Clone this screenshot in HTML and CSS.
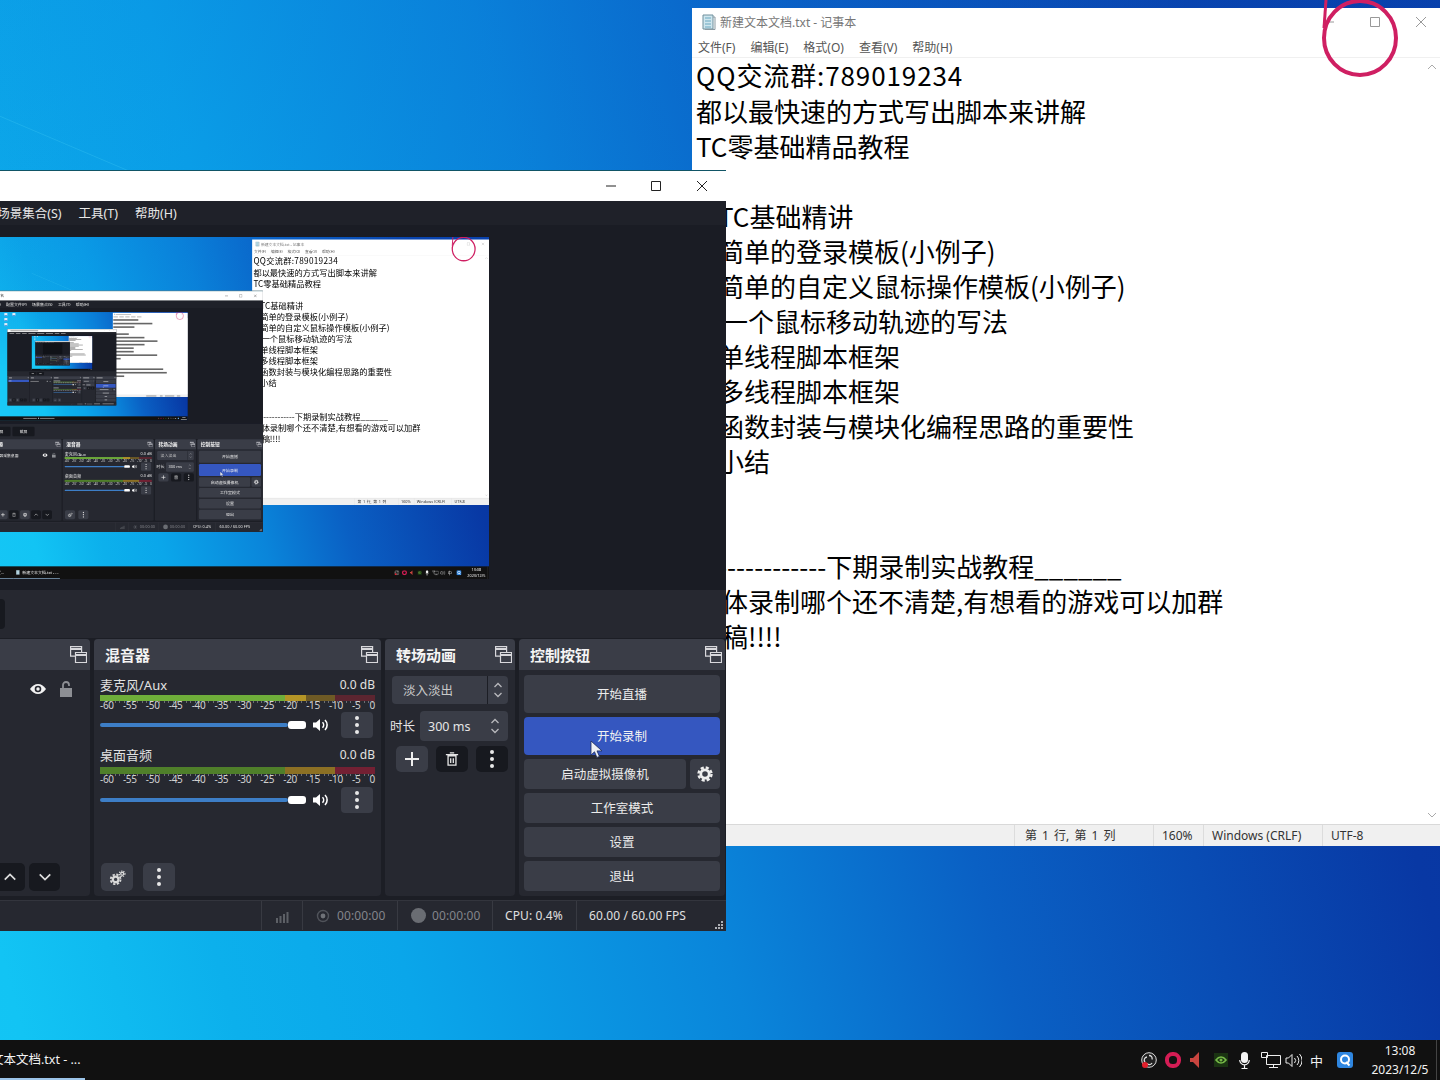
FILE: index.html
```html
<!DOCTYPE html>
<html lang="zh-CN">
<head>
<meta charset="utf-8">
<title>OBS 录制桌面</title>
<link rel="stylesheet" href="styles.css">
</head>
<body>
<svg class="defs" aria-hidden="true">
  <symbol id="i-float" viewBox="0 0 17 17"><path d="M.6.6h11v9.5H.6z" fill="none" stroke="#d8d8dc" stroke-width="1.2"/><path d="M.6 3h11" stroke="#d8d8dc" stroke-width="2"/><path d="M5.5 6.5h11v10h-11z" fill="#3a3d47" stroke="#d8d8dc" stroke-width="1.2"/><path d="M5.5 9h11" stroke="#d8d8dc" stroke-width="2"/></symbol>
  <symbol id="i-kebab" viewBox="0 0 6 20"><circle cx="3" cy="3" r="2" fill="#e8e8e8"/><circle cx="3" cy="10" r="2" fill="#e8e8e8"/><circle cx="3" cy="17" r="2" fill="#e8e8e8"/></symbol>
  <symbol id="i-spk" viewBox="0 0 17 14"><path d="M1 4.5h3L8 1v12L4 9.500H1z" fill="#fff"/><path d="M10.500 4.200a4 4 0 0 1 0 5.600M13 2a7 7 0 0 1 0 10" fill="none" stroke="#fff" stroke-width="1.600"/></symbol>
  <symbol id="i-updown" viewBox="0 0 10 18"><path d="M1.500 6 5 2.500 8.500 6M1.500 12 5 15.500 8.500 12" fill="none" stroke="#b8b8bc" stroke-width="1.300"/></symbol>
  <symbol id="i-gear" viewBox="0 0 16 16"><circle cx="8" cy="8" r="4.200" fill="none" stroke="#eee" stroke-width="2.800"/><circle cx="8" cy="8" r="6.500" fill="none" stroke="#eee" stroke-width="2.400" stroke-dasharray="3.100 2"/></symbol>
</svg>

<main class="viewport">
  <div class="screen" id="screen">
    <div class="desk-ray"></div>
    <div class="desk-icon desk-a"></div>
    <div class="desk-icon desk-b"></div>
    <div class="desk-icon desk-c"></div>
    <div class="desk-icon desk-d"></div>

    <section class="notepad">
      <header class="np-title">
        <svg class="np-icon" viewBox="0 0 14 16"><path d="M1 1h10v14H1z" fill="#cfe6ee" stroke="#6f8f9c"/><path d="M11 3h2v12.500H3V15" fill="none" stroke="#8a9aa2"/><path d="M3 4h6M3 7h6M3 10h6M3 13h6" stroke="#6aa8c0"/></svg>
        <span class="np-name">新建文本文档.txt - 记事本</span>
        <div class="np-btns">
          <span class="np-btn"><svg viewBox="0 0 10 10"><path d="M0 5h10" stroke="#999"/></svg></span>
          <span class="np-btn"><svg viewBox="0 0 10 10"><path d="M.5.5h9v9h-9z" fill="none" stroke="#999"/></svg></span>
          <span class="np-btn"><svg viewBox="0 0 10 10"><path d="M0 0l10 10M10 0 0 10" stroke="#999"/></svg></span>
        </div>
      </header>
      <nav class="np-menu"><span>文件(F)</span><span>编辑(E)</span><span>格式(O)</span><span>查看(V)</span><span>帮助(H)</span></nav>
      <div class="np-body">
        <div class="np-text">
          <p class="np-first">QQ交流群:789019234</p>
          <p>都以最快速的方式写出脚本来讲解</p>
          <p>TC零基础精品教程</p>
          <p></p>
          <p class="np-ind">TC基础精讲</p>
          <p class="np-ind">简单的登录模板(小例子)</p>
          <p class="np-ind">简单的自定义鼠标操作模板(小例子)</p>
          <p class="np-ind np-ind-wide">一个鼠标移动轨迹的写法</p>
          <p class="np-ind">单线程脚本框架</p>
          <p class="np-ind">多线程脚本框架</p>
          <p class="np-ind">函数封装与模块化编程思路的重要性</p>
          <p class="np-ind">小结</p>
          <p></p>
          <p></p>
          <p class="np-dash">--------------下期录制实战教程______</p>
          <p>具体录制哪个还不清楚,有想看的游戏可以加群</p>
          <p>投稿!!!!</p>
        </div>
        <aside class="np-scroll">
          <svg viewBox="0 0 10 6"><path d="M1 5l4-4 4 4" fill="none" stroke="#aaa"/></svg>
          <svg viewBox="0 0 10 6"><path d="M1 1l4 4 4-4" fill="none" stroke="#aaa"/></svg>
        </aside>
      </div>
      <footer class="np-status">
        <span></span><span>第 1 行, 第 1 列</span><span>160%</span><span>Windows (CRLF)</span><span>UTF-8</span>
      </footer>
    </section>

    <svg class="pen-circle" viewBox="0 0 110 85"><ellipse cx="45" cy="38" rx="36" ry="37" fill="none" stroke="#cf1f62" stroke-width="4"/><path d="M11 0 9 28" fill="none" stroke="#cf1f62" stroke-width="3"/></svg>

    <section class="obs">
      <header class="obs-title">
        <span class="obs-name">OBS 29.1.3 - 配置文件: 未命名 - 场景: 未命名</span>
        <div class="obs-btns">
          <span><svg viewBox="0 0 10 10"><path d="M0 5h10" stroke="#222"/></svg></span>
          <span><svg viewBox="0 0 10 10"><path d="M.5.5h9v9h-9z" fill="none" stroke="#222"/></svg></span>
          <span><svg viewBox="0 0 10 10"><path d="M0 0l10 10M10 0 0 10" stroke="#222"/></svg></span>
        </div>
      </header>
      <nav class="obs-menu"><span>文件(F)</span><span>编辑(E)</span><span>视图(V)</span><span>停靠窗口(D)</span><span>配置文件(P)</span><span>场景集合(S)</span><span>工具(T)</span><span>帮助(H)</span></nav>
      <div class="obs-preview"><div class="preview-slot"></div></div>
      <div class="scene-tools"><span class="tool-btn">录屏</span><span class="tool-btn">截屏</span></div>

      <div class="docks">
        <section class="dock dock-scenes">
          <h2 class="dock-head"><span>场景</span><svg class="float"><use href="#i-float"/></svg></h2>
          <div class="scene-list"><div class="scene-row">场景</div></div>
          <div class="dock-foot">
            <span class="ib ib-light"><svg viewBox="0 0 14 14"><path d="M7 1v12M1 7h12" stroke="#eee" stroke-width="2"/></svg></span>
            <span class="ib ib-dark"><svg viewBox="0 0 14 14"><path d="M3 4h8v9H3zM2 3h10M5 1h4" fill="none" stroke="#ddd" stroke-width="1.500"/></svg></span>
            <span class="ib ib-light"><svg><use href="#i-gear"/></svg></span>
            <span class="ib ib-dark"><svg viewBox="0 0 16 10"><path d="M2 8l6-6 6 6" fill="none" stroke="#ddd" stroke-width="2"/></svg></span>
            <span class="ib ib-dark"><svg viewBox="0 0 16 10"><path d="M2 2l6 6 6-6" fill="none" stroke="#ddd" stroke-width="2"/></svg></span>
          </div>
        </section>

        <section class="dock dock-sources">
          <h2 class="dock-head"><span>来源</span><svg class="float"><use href="#i-float"/></svg></h2>
          <div class="source-list">
            <div class="source-row">
              <span class="source-name">显示器采集桌面</span>
              <svg class="eye" viewBox="0 0 18 12"><path d="M1 6c2.500-3.600 5-5 8-5s5.500 1.400 8 5c-2.500 3.600-5 5-8 5s-5.500-1.400-8-5z" fill="#f2f2f2"/><circle cx="9" cy="6" r="3.300" fill="#262830"/><circle cx="9" cy="6" r="1.700" fill="#f2f2f2"/></svg>
              <svg class="lock" viewBox="0 0 12 16"><path d="M3 7V4a3 3 0 0 1 6 0v1" fill="none" stroke="#8d8f94" stroke-width="1.800"/><path d="M0 7h12v9H0z" fill="#8d8f94"/></svg>
            </div>
          </div>
          <div class="dock-foot dock-foot-src">
            <span class="ib ib-light"><svg viewBox="0 0 14 14"><path d="M7 1v12M1 7h12" stroke="#eee" stroke-width="2"/></svg></span>
            <span class="ib ib-dark"><svg viewBox="0 0 14 16"><path d="M3 5h8v10H3zM1 3h12M5 1h4" fill="none" stroke="#ddd" stroke-width="1.500"/></svg></span>
            <span class="ib ib-light"><svg><use href="#i-gear"/></svg></span>
            <span class="ib ib-dark"><svg viewBox="0 0 16 10"><path d="M2 8l6-6 6 6" fill="none" stroke="#ddd" stroke-width="2"/></svg></span>
            <span class="ib ib-dark"><svg viewBox="0 0 16 10"><path d="M2 2l6 6 6-6" fill="none" stroke="#ddd" stroke-width="2"/></svg></span>
          </div>
        </section>

        <section class="dock dock-mixer">
          <h2 class="dock-head"><span>混音器</span><svg class="float"><use href="#i-float"/></svg></h2>
          <div class="mixer-body">
            <div class="channel">
              <div class="ch-head"><span>麦克风/Aux</span><span class="ch-db">0.0 dB</span></div>
              <div class="meter meter-live"><i></i><i></i></div>
              <div class="ticks"></div>
              <div class="scale"><span>-60</span><span>-55</span><span>-50</span><span>-45</span><span>-40</span><span>-35</span><span>-30</span><span>-25</span><span>-20</span><span>-15</span><span>-10</span><span>-5</span><span>0</span></div>
              <div class="fader"><div class="f-track"></div><div class="f-thumb"></div><svg class="f-spk"><use href="#i-spk"/></svg><span class="f-menu"><svg><use href="#i-kebab"/></svg></span></div>
            </div>
            <div class="channel channel-2">
              <div class="ch-head"><span>桌面音频</span><span class="ch-db">0.0 dB</span></div>
              <div class="meter"><i></i><i></i></div>
              <div class="ticks"></div>
              <div class="scale"><span>-60</span><span>-55</span><span>-50</span><span>-45</span><span>-40</span><span>-35</span><span>-30</span><span>-25</span><span>-20</span><span>-15</span><span>-10</span><span>-5</span><span>0</span></div>
              <div class="fader"><div class="f-track"></div><div class="f-thumb"></div><svg class="f-spk"><use href="#i-spk"/></svg><span class="f-menu"><svg><use href="#i-kebab"/></svg></span></div>
            </div>
          </div>
          <div class="dock-foot dock-foot-mix">
            <span class="ib ib-light ib-gears"><svg viewBox="0 0 18 16"><circle cx="7" cy="10" r="3" fill="none" stroke="#d8d8d8" stroke-width="2.400"/><circle cx="7" cy="10" r="5.200" fill="none" stroke="#d8d8d8" stroke-width="2" stroke-dasharray="2.500 1.600"/><circle cx="14" cy="4" r="1.600" fill="none" stroke="#d8d8d8" stroke-width="1.400"/><circle cx="14" cy="4" r="3" fill="none" stroke="#d8d8d8" stroke-width="1.200" stroke-dasharray="1.500 1"/></svg></span>
            <span class="ib ib-light"><svg class="kb"><use href="#i-kebab"/></svg></span>
          </div>
        </section>

        <section class="dock dock-trans">
          <h2 class="dock-head"><span>转场动画</span><svg class="float"><use href="#i-float"/></svg></h2>
          <div class="trans-body">
            <div class="t-select"><span class="t-value">淡入淡出</span><span class="t-arrow"><svg><use href="#i-updown"/></svg></span></div>
            <div class="t-dur"><span class="t-label">时长</span><div class="t-spin"><span>300 ms</span><svg><use href="#i-updown"/></svg></div></div>
            <div class="t-tools">
              <span class="ib ib-light"><svg viewBox="0 0 14 14"><path d="M7 0v14M0 7h14" stroke="#eee" stroke-width="2"/></svg></span>
              <span class="ib ib-dark"><svg viewBox="0 0 14 16"><path d="M2.500 4.500h9V15h-9zM0 3h14M4.500 1h5M5.500 7v5.500M8.500 7v5.500" fill="none" stroke="#e4e4e4" stroke-width="1.500"/></svg></span>
              <span class="ib ib-dark"><svg class="kb"><use href="#i-kebab"/></svg></span>
            </div>
          </div>
        </section>

        <section class="dock dock-ctrl">
          <h2 class="dock-head"><span>控制按钮</span><svg class="float"><use href="#i-float"/></svg></h2>
          <div class="ctrl-body">
            <button class="cb cb-tall">开始直播</button>
            <button class="cb cb-tall cb-on">开始录制</button>
            <div class="cb-row"><button class="cb cb-grow">启动虚拟摄像机</button><button class="cb cb-icon"><svg><use href="#i-gear"/></svg></button></div>
            <button class="cb">工作室模式</button>
            <button class="cb">设置</button>
            <button class="cb">退出</button>
          </div>
        </section>
      </div>

      <footer class="obs-status">
        <span class="st st-signal"><svg viewBox="0 0 16 14"><path d="M1 9h2v5H1zM4.500 7h2v7h-2zM8 5h2v9H8zM11.500 3h2v11h-2z" fill="#5d6066"/></svg></span>
        <span class="st st-live"><svg viewBox="0 0 14 14"><circle cx="7" cy="7" r="2.400" fill="#6f7278"/><circle cx="7" cy="7" r="5.500" fill="none" stroke="#50535a" stroke-width="1.400"/></svg><b>00:00:00</b></span>
        <span class="st st-rec"><i class="rec-dot"></i><b>00:00:00</b></span>
        <span class="st st-cpu">CPU: 0.4%</span>
        <span class="st st-fps">60.00 / 60.00 FPS</span>
        <svg class="grip" viewBox="0 0 8 8"><path d="M6 0h2v2H6zM3 3h2v2H3zM6 3h2v2H6zM0 6h2v2H0zM3 6h2v2H3zM6 6h2v2H6z" fill="#aeb0b5"/></svg>
      </footer>
    </section>

    <svg class="cursor" viewBox="0 0 13 19"><path d="M1 1v14l3.500-3.200 2.400 5.600 2.500-1-2.400-5.500H12z" fill="#eef0f5" stroke="#1c2b58" stroke-width=".8"/></svg>

    <footer class="taskbar">
      <span class="task task-obs"><span class="task-label">OBS 29.1.3 - 配置...</span></span>
      <span class="task">
        <svg class="np-icon" viewBox="0 0 14 16"><path d="M1 1h10v14H1z" fill="#cfe6ee" stroke="#6f8f9c"/><path d="M3 4h6M3 7h6M3 10h6M3 13h6" stroke="#6aa8c0"/></svg>
        <span class="task-label">新建文本文档.txt - ...</span>
      </span>
      <div class="tray">
        <svg class="tr tr-obs" viewBox="0 0 16 16"><circle cx="8" cy="8" r="7.300" fill="#222" stroke="#ddd"/><path d="M8 3.500a3 3 0 0 1 3 4M4 10a3 3 0 0 1 2-5M11 11a3 3 0 0 1-5 .5" fill="none" stroke="#ddd" stroke-width="1.300"/><circle cx="4" cy="13" r="3" fill="#e2202c"/></svg>
        <svg class="tr tr-ring" viewBox="0 0 16 16"><rect x="2" y="2" width="12" height="12" rx="5.500" fill="none" stroke="#d51d55" stroke-width="4"/></svg>
        <svg class="tr tr-rspk" viewBox="0 0 9 16"><path d="M0 6h3l6-6v16L3 10H0z" fill="#c9453f"/></svg>
        <svg class="tr tr-nv" viewBox="0 0 14 14"><rect width="14" height="14" fill="#1a3312"/><path d="M2 7c3-4 7-4 10 0-3 4-7 4-10 0z" fill="none" stroke="#76b947" stroke-width="1.600"/><circle cx="7" cy="7" r="1.500" fill="#76b947"/></svg>
        <svg class="tr tr-mic" viewBox="0 0 11 17"><rect x="2" y="0" width="7" height="11" rx="3.500" fill="#f4f4f4"/><path d="M.7 8a4.800 4.800 0 0 0 9.600 0M5.500 13v3M2.500 16.500h6" fill="none" stroke="#f4f4f4" stroke-width="1.200"/></svg>
        <svg class="tr tr-net" viewBox="0 0 20 16"><path d="M5.500 3.500h14v9h-14zM8 15.500h9M12.500 12.500v3M.5.500h6v5h-6z" fill="#111" stroke="#eee"/></svg>
        <svg class="tr tr-vol" viewBox="0 0 17 15"><path d="M1 5h2.500L7 1.500v12L3.500 10H1z" fill="none" stroke="#eee"/><path d="M9.500 5a3.600 3.600 0 0 1 0 5M12 3a6.500 6.500 0 0 1 0 9M14.500 1a9.500 9.500 0 0 1 0 13" fill="none" stroke="#eee"/></svg>
        <span class="tr-ime">中</span>
        <svg class="tr tr-q" viewBox="0 0 16 16"><rect width="16" height="16" rx="3" fill="#2f86e0"/><circle cx="8" cy="7.500" r="4" fill="none" stroke="#fff" stroke-width="2"/><path d="M9 10l3.500 3.500" stroke="#fff" stroke-width="2"/></svg>
        <time class="clock"><span>13:08</span><span>2023/12/5</span></time>
      </div>
    </footer>
  </div>
</main>
<script src="app.js"></script>
</body>
</html>
```
FILE: styles.css
```css
* { box-sizing: border-box; }
html, body { margin: 0; padding: 0; background: #000; }
body { font-family: "Noto Sans", "Noto Sans CJK SC", sans-serif; }
.defs { position: absolute; width: 0; height: 0; }
p, h2 { margin: 0; }
svg { display: block; }

.viewport { width: 1440px; height: 1080px; overflow: hidden; }
.viewport > .screen { margin-left: -480px; }

.screen {
  position: relative;
  width: 1920px;
  height: 1080px;
  overflow: hidden;
  background:
    linear-gradient(to bottom, rgba(10, 110, 215, .22), rgba(10, 110, 215, 0) 55%),
    linear-gradient(75deg, #1ccaf6 0%, #12c4f4 23.300%, #0cb0ec 33%, #0aa6ea 41.400%, #0a85da 56.200%, #0a60c4 68.500%, #0838a4 88.500%, #0834a0 100%);
}

.desk-ray { position: absolute; left: 476px; top: 114px; width: 200px; height: 1px; background: rgba(70, 205, 245, .3); transform: rotate(23deg); transform-origin: 0 0; }
.desk-icon { position: absolute; width: 30px; height: 30px; background: #e6eef8; border-bottom: 8px solid #2a7fd4; }
.desk-a { left: 90px; top: 10px; }
.desk-b { left: 170px; top: 10px; }
.desk-c { left: 90px; top: 60px; }
.desk-d { left: 90px; top: 110px; }

/* notepad */
.notepad {
  position: absolute;
  left: 1172px;
  top: 8px;
  width: 752px;
  height: 838px;
  display: flex;
  flex-direction: column;
  background: #fff;
}
.np-title { height: 28px; flex: none; display: flex; align-items: center; padding-left: 10px; color: #777; font-size: 12px; }
.np-icon { width: 14px; height: 16px; flex: none; }
.np-name { margin-left: 4px; }
.np-btns { margin-left: auto; display: flex; }
.np-btn { width: 46px; height: 28px; display: flex; align-items: center; justify-content: center; }
.np-btn svg { width: 10px; height: 10px; }
.np-menu { height: 22px; flex: none; display: flex; gap: 15px; padding: 1px 0 0 6px; align-items: center; font-size: 12px; color: #555; border-bottom: 1px solid #f0f0f0; }
.np-body { flex: 1; display: flex; min-height: 0; overflow: hidden; }
.np-text { flex: 1; padding: 0 0 0 4px; font-size: 26px; line-height: 35px; color: #000; font-family: "Noto Sans CJK SC", sans-serif; font-weight: 400; }
.np-text p { height: 35px; white-space: pre; }
.np-text .np-first { letter-spacing: .9px; line-height: 33px; }
.np-text .np-ind { padding-left: 22px; }
.np-text .np-ind-wide { padding-left: 26px; }
.np-text .np-dash { padding-left: 4px; }
.np-scroll { width: 20px; flex: none; background: #fff; display: flex; flex-direction: column; justify-content: space-between; padding: 6px 4px 6px 0; align-items: center; }
.np-scroll svg { width: 10px; height: 6px; }
.np-status {
  height: 22px;
  flex: none;
  display: grid;
  grid-template-columns: 322px 139px 50px 119px 1fr;
  align-items: stretch;
  background: #f0f0f0;
  border-top: 1px solid #d9d9d9;
  color: #333;
  font-size: 12px;
  line-height: 21px;
}
.np-status span { padding-left: 8px; border-left: 1px solid #dcdcdc; }
.np-status span:first-child { border: 0; }
.np-status span:nth-child(2) { padding-left: 10px; word-spacing: 2px; }

.pen-circle { position: absolute; left: 1795px; top: 0; width: 110px; height: 85px; }

/* OBS */
.obs {
  position: absolute;
  left: 121px;
  top: 170px;
  width: 1085px;
  height: 761px;
  display: flex;
  flex-direction: column;
  background: #1c1e25;
  color: #e6e6e6;
  font-size: 12px;
}
.obs-title { height: 31px; flex: none; display: flex; align-items: center; background: #fff; color: #333; padding: 0 0 1px 30px; border-top: 1px solid #156; }
.obs-btns { margin-left: auto; display: flex; padding-right: 1.500px; }
.obs-btns span { width: 45px; height: 28px; display: flex; align-items: center; justify-content: center; }
.obs-btns span:last-child { width: 46px; }
.obs-btns svg { width: 10px; height: 10px; }
.obs-menu { height: 24px; flex: none; display: flex; gap: 17px; align-items: center; padding: 0 0 2px 21px; background: #1f2129; font-size: 12.500px; color: #e8e8e8; }
.obs-preview { flex: 1; min-height: 0; display: flex; align-items: center; justify-content: center; padding-left: 3px; background: #1a1c24; }
.preview-slot { position: relative; width: 608px; height: 342px; flex: none; overflow: hidden; background: #101218; filter: blur(.35px); }
.preview-slot > .screen { position: absolute; left: 0; top: 0; transform: scale(.31667); transform-origin: 0 0; }
.scene-tools { height: 48px; flex: none; display: flex; align-items: center; gap: 6px; padding-left: 218px; background: #262830; }
.tool-btn { width: 70px; height: 30px; border-radius: 4px; background: #17191f; display: flex; align-items: center; justify-content: center; font-size: 12px; flex: none; }

.docks { flex: none; height: 257px; margin: 1px 0 4px; padding: 0 1px 0 4px; display: flex; gap: 4px; }
.dock { display: flex; flex-direction: column; background: #262830; border-radius: 4px; flex: none; }
.dock-scenes { width: 215px; }
.dock-sources { width: 226px; }
.dock-mixer { width: 287px; }
.dock-trans { width: 130px; }
.dock-ctrl { width: 206px; }
.dock-head { height: 31px; flex: none; display: flex; align-items: center; justify-content: space-between; padding: 0 3px 0 11px; background: #3a3d47; border-radius: 4px 4px 0 0; font-size: 15px; font-weight: 700; color: #f4f4f4; }
.float { width: 17px; height: 17px; }

.scene-list { flex: 1; padding: 4px; }
.scene-row { height: 24px; line-height: 24px; padding-left: 8px; background: #3557c0; border-radius: 3px; }
.dock-foot { height: 33px; flex: none; display: flex; align-items: flex-start; gap: 5px; padding-left: 8px; }
.dock-foot-src { gap: 4px; justify-content: flex-end; padding: 0 30px 0 0; }
.dock-foot-src .ib { width: 31px; }
.dock-foot-mix { gap: 10px; padding-left: 7px; }

.ib { width: 32px; height: 28px; border-radius: 5px; display: flex; align-items: center; justify-content: center; flex: none; }
.ib svg { width: 14px; height: 14px; }
.ib .kb { width: 6px; height: 20px; }
.ib-light { background: #3a3d47; }
.ib-dark { background: #17191f; }
.ib-gears svg { width: 17px; height: 15px; }

.source-list { flex: 1; }
.source-row { height: 38px; display: flex; align-items: center; }
.source-name { flex: 1; padding-left: 6px; }
.eye { width: 18px; height: 12px; margin-right: 13px; }
.lock { width: 12px; height: 16px; margin-right: 18px; }

.mixer-body { flex: 1; padding: 6px 6px 0; }
.channel { height: 71px; }
.ch-head { display: flex; justify-content: space-between; font-size: 13px; line-height: 18px; color: #e2e2e2; }
.ch-db { font-size: 12px; }
.meter { margin-top: 1px; height: 6px; display: flex; flex-direction: column; }
.meter i { flex: 1; display: block; background: linear-gradient(to right, #4f7f2a 0 67.300%, #8c7024 67.300% 85.500%, #732033 85.500% 100%); }
.meter-live i { background: linear-gradient(to right, #6fae3a 0 67.300%, #b49526 67.300% 75%, #6e5a25 75% 85.500%, #5c2530 85.500% 100%); }
.ticks { height: 2px; background: repeating-linear-gradient(to right, #6c6e74 0 1px, transparent 1px 4.440px); margin-left: 6px; }
.scale { display: flex; justify-content: space-between; margin-top: -2px; font-size: 10px; line-height: 9px; color: #d0d0d0; letter-spacing: -.3px; }
.fader { display: flex; align-items: center; height: 26px; margin-top: 2px; }
.channel-2 .ch-head { margin-top: -1px; }
.channel-2 .meter { margin-top: 3px; height: 7px; }
.channel-2 .scale { margin-top: -1px; }
.channel-2 .fader { margin-top: 3px; }
.f-track { width: 188px; height: 4px; background: #3d7ec6; border-radius: 2px; }
.f-thumb { width: 18px; height: 8px; background: #fff; border-radius: 3px; }
.f-spk { width: 17px; height: 14px; margin-left: 6px; }
.f-menu { width: 32px; height: 26px; margin-left: 12px; background: #3a3d47; border-radius: 4px; display: flex; align-items: center; justify-content: center; }
.f-menu svg { width: 6px; height: 20px; }

.trans-body { padding: 6px 7px 0; display: flex; flex-direction: column; }
.t-select { height: 28px; display: flex; align-items: center; background: #3a3d47; border-radius: 4px; color: #c9c9c9; font-size: 12.500px; }
.t-value { flex: 1; padding: 0 0 2px 11px; }
.t-arrow { width: 21px; height: 28px; border-left: 1px solid #1c1e25; display: flex; align-items: center; justify-content: center; }
.t-arrow svg { width: 10px; height: 18px; }
.t-dur { height: 30px; margin: 7px 0 0 -2px; display: flex; align-items: center; }
.t-label { width: 30px; flex: none; font-size: 12.500px; padding-bottom: 2px; }
.t-spin { flex: 1; height: 30px; padding: 0 8px; display: flex; align-items: center; justify-content: space-between; background: #3a3d47; border-radius: 4px; font-size: 12.500px; }
.t-spin svg { width: 10px; height: 18px; }
.t-tools { display: flex; justify-content: flex-start; gap: 8px; margin: 5px 0 0 4px; }
.t-tools .ib { height: 26px; }

.ctrl-body { padding: 5px 5px 0; display: flex; flex-direction: column; gap: 4px; }
.cb { height: 30px; border: 0; padding: 0 0 2px; border-radius: 4px; background: #3a3d47; color: #ececec; font: 12.500px "Noto Sans", "Noto Sans CJK SC", sans-serif; }
.cb-tall { height: 38px; }
.cb-on { background: #3557c0; color: #f2f2f2; }
.cb-row { display: flex; gap: 4px; }
.cb-grow { flex: 1; }
.cb-icon { width: 30px; padding: 0; display: flex; align-items: center; justify-content: center; }
.cb-icon svg { width: 16px; height: 16px; }

.obs-status { position: relative; height: 31px; flex: none; display: flex; align-items: stretch; background: #262830; border-top: 1px solid #33353d; color: #e0e0e0; font-size: 12px; letter-spacing: .1px; padding: 0 0 1px 620px; }
.st { display: flex; align-items: center; border-left: 1px solid #383a42; flex: none; }
.st b { font-weight: 400; color: #83858b; }
.st-signal { width: 41px; padding-left: 13px; }
.st-signal svg { width: 16px; height: 14px; }
.st-live { width: 95px; padding-left: 13px; gap: 7px; }
.st-live svg { width: 14px; height: 14px; }
.st-rec { width: 95px; padding-left: 13px; gap: 6px; }
.rec-dot { width: 15px; height: 15px; border-radius: 50%; background: #6a6d73; }
.st-cpu { width: 84px; padding-left: 12px; }
.st-fps { padding-left: 12px; }
.grip { position: absolute; right: 3px; bottom: 2px; width: 8px; height: 8px; }

.cursor { position: absolute; left: 1070px; top: 740px; width: 13px; height: 19px; }

/* taskbar */
.taskbar { position: absolute; left: 0; right: 0; top: 1040px; height: 40px; display: flex; align-items: stretch; background: #111; padding-left: 271px; color: #f2f2f2; font-size: 12.500px; }
.task { width: 147px; flex: none; display: flex; align-items: center; gap: 6px; padding-left: 8px; border-bottom: 2px solid #9cc4e8; white-space: nowrap; }
.task-label { margin-top: -1px; }
.tray { margin-left: auto; display: flex; align-items: center; padding-right: 3px; border-right: 1px solid #444; margin-right: 3px; }
.tr { flex: none; }
.tr-obs { width: 16px; height: 16px; }
.tr-ring { width: 16px; height: 16px; margin-left: 8px; }
.tr-rspk { width: 9px; height: 16px; margin-left: 9px; }
.tr-nv { width: 14px; height: 14px; margin-left: 15px; }
.tr-mic { width: 11px; height: 17px; margin-left: 11px; }
.tr-net { width: 20px; height: 16px; margin-left: 11px; }
.tr-vol { width: 17px; height: 15px; margin-left: 4px; }
.tr-ime { margin-left: 8px; font-size: 13px; width: 13px; }
.tr-q { width: 16px; height: 16px; margin-left: 14px; }
.clock { width: 66px; margin-left: 14px; display: flex; flex-direction: column; align-items: center; font-size: 12px; line-height: 19px; }

/* text of the deepest preview levels is unreadable: dim strokes stand in for it */
.ghost { display: inline-block; height: .62em; vertical-align: middle; background: currentColor; opacity: .6; }
```
FILE: app.js
```js
// The OBS preview shows the desktop, including OBS itself: nest copies of the screen.
const root = document.getElementById('screen');
const template = root.cloneNode(true);
template.removeAttribute('id');
template.setAttribute('aria-hidden', 'true');

// Replace text by strokes of about the same width; at these scales it cannot be read.
function ghostText(node) {
  const walker = document.createTreeWalker(node, NodeFilter.SHOW_TEXT);
  const texts = [];
  while (walker.nextNode()) {
    if (walker.currentNode.nodeValue.trim()) texts.push(walker.currentNode);
  }
  for (const text of texts) {
    const value = text.nodeValue.trim();
    let ems = 0;
    for (const ch of value) ems += ch.charCodeAt(0) > 255 ? 1 : 0.55;
    const bar = document.createElement('span');
    bar.className = 'ghost';
    bar.style.width = ems.toFixed(2) + 'em';
    text.replaceWith(bar);
  }
}

let inner = null;
for (let depth = 0; depth < 3; depth++) {
  const copy = template.cloneNode(true);
  if (depth < 2) ghostText(copy);
  if (inner) copy.querySelector('.preview-slot').appendChild(inner);
  inner = copy;
}
root.querySelector('.preview-slot').appendChild(inner);
```
